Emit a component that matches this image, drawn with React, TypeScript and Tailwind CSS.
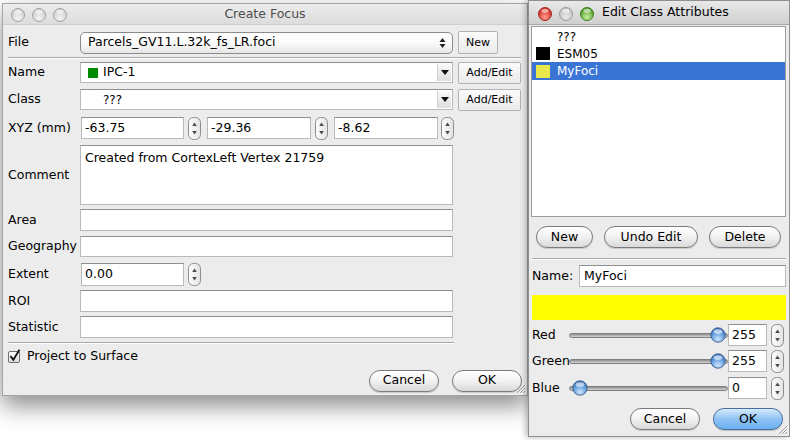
import React from 'react';

function Lights({ active }: { active: boolean }) {
  const fills = active
    ? [
        ['#ff9c8f', '#d3271b', '#9c2a22'],
        ['#e8e8e8', '#c2c2c2', '#9a9a9a'],
        ['#c8f0a0', '#4c9c22', '#3f7a22'],
      ]
    : [
        ['#f4f4f4', '#cfcfcf', '#a2a2a2'],
        ['#f4f4f4', '#cfcfcf', '#a2a2a2'],
        ['#f4f4f4', '#cfcfcf', '#a2a2a2'],
      ];
  return (
    <svg width="58" height="16" viewBox="0 0 58 16">
      <defs>
        {fills.map((f, i) => (
          <radialGradient key={i} id={`tl${active ? 'a' : 'i'}${i}`} cx="0.5" cy="0.75" r="0.65">
            <stop offset="0" stopColor={f[0]} />
            <stop offset="1" stopColor={f[1]} />
          </radialGradient>
        ))}
      </defs>
      {fills.map((f, i) => (
        <g key={i}>
          <circle cx={7 + i * 21} cy="8" r="6.5" fill={`url(#tl${active ? 'a' : 'i'}${i})`} stroke={f[2]} strokeWidth="1" />
          <ellipse cx={7 + i * 21} cy="4.8" rx="3.6" ry="2" fill="#fff" opacity="0.55" />
        </g>
      ))}
    </svg>
  );
}

function Spinner() {
  return (
    <svg width="13" height="23" viewBox="0 0 13 23" className="shrink-0">
      <defs>
        <linearGradient id="spg" x1="0" x2="1" y1="0" y2="0">
          <stop offset="0" stopColor="#ffffff" />
          <stop offset="1" stopColor="#e2e2e2" />
        </linearGradient>
      </defs>
      <rect x="0.5" y="0.5" width="12" height="22" rx="5" fill="url(#spg)" stroke="#8d8d8d" />
      <path d="M6.5 5.5 L8.8 9 L4.2 9 Z" fill="#4a4a4a" />
      <path d="M6.5 17.5 L8.8 14 L4.2 14 Z" fill="#4a4a4a" />
    </svg>
  );
}

function Grip() {
  return (
    <svg width="11" height="11" viewBox="0 0 11 11">
      <path d="M10 2 L2 10 M10 5 L5 10 M10 8 L8 10" stroke="#9a9a9a" strokeWidth="1" />
      <path d="M10.8 2.8 L2.8 10.8 M10.8 5.8 L5.8 10.8" stroke="#fff" strokeWidth="0.8" />
    </svg>
  );
}

function Thumb() {
  return (
    <svg width="16" height="16" viewBox="0 0 16 16">
      <defs>
        <radialGradient id="thg" cx="0.5" cy="0.8" r="0.7">
          <stop offset="0" stopColor="#cfe6fb" />
          <stop offset="0.6" stopColor="#6ea6e2" />
          <stop offset="1" stopColor="#3a73bd" />
        </radialGradient>
      </defs>
      <circle cx="8" cy="8" r="7.2" fill="url(#thg)" stroke="#37598a" strokeWidth="0.9" />
      <ellipse cx="8" cy="4.6" rx="4.4" ry="2.4" fill="#fff" opacity="0.6" />
    </svg>
  );
}

function Slider({ left }: { left: string }) {
  return (
    <div className="relative h-[22px] w-[159px] flex items-center">
      <div className="h-[5px] w-full rounded-full border border-[#7f7f7f] bg-linear-to-b from-[#8e8e8e] to-[#d6d6d6]" />
      <div className={`absolute top-[3px] ${left}`}>
        <Thumb />
      </div>
    </div>
  );
}

function Groove({ className }: { className: string }) {
  return <div className={`h-[2px] shrink-0 border-t border-[#a9a9a9] border-b border-b-white ${className}`} />;
}

const field = 'bg-white border border-[#b9b9b9] border-t-[#8e8e8e] flex items-center';
const aqua =
  'h-[22px] rounded-full border border-[#7b7b7b] bg-linear-to-b from-white via-[#f1f1f1] to-[#d9d9d9] shadow-[0_1px_1px_rgba(0,0,0,0.15)] flex items-center justify-center text-[12.5px]';
const square =
  'rounded-[2px] border border-[#b3b3b3] bg-linear-to-b from-[#fbfbfb] to-[#ebebeb] flex items-center justify-center text-[11px]';

function Row({ label, className, children }: { label: string; className: string; children: React.ReactNode }) {
  return (
    <div className={`flex shrink-0 items-center ${className}`}>
      <div className="w-[72px] shrink-0 text-[12.5px]">{label}</div>
      {children}
    </div>
  );
}

function ComboArrow() {
  return (
    <div className="ml-auto mr-[1px] h-[17px] w-[14px] bg-linear-to-b from-[#fafafa] to-[#dedede] border-l border-[#cfcfcf] flex items-center justify-center">
      <svg width="8" height="5" viewBox="0 0 8 5">
        <path d="M0 0 L8 0 L4 5 Z" fill="#111" />
      </svg>
    </div>
  );
}

export default function App() {
  return (
    <div className="w-[790px] h-[440px] bg-white flex items-start overflow-hidden font-['DejaVu_Sans',sans-serif] text-black leading-none">
      {/* Create Focus */}
      <div className="relative ml-[2px] mt-[3px] w-[526px] h-[393px] shrink-0 border border-[#a4a4a4] bg-[#ececec] shadow-[0_10px_22px_rgba(0,0,0,0.45)] flex flex-col">
        <div className="h-[21px] shrink-0 relative flex items-center justify-center bg-linear-to-b from-[#ececec] to-[#dcdcdc] border-b border-[#d0d0d0]">
          <div className="absolute left-[8px] top-[3px]">
            <Lights active={false} />
          </div>
          <span className="text-[12.5px] text-[#4d4d4d]">Create Focus</span>
        </div>
        <div className="pl-[5px] flex flex-col">
          <Row label="File" className="mt-[6px] h-[23px]">
            <div className="w-[373px] h-[22px] rounded-[5px] border border-[#8c8c8c] bg-linear-to-b from-white via-[#fafafa] to-[#e6e6e6] flex items-center pl-[7px] pr-[6px] text-[12.5px]">
              Parcels_GV11.L.32k_fs_LR.foci
              <svg className="ml-auto" width="7" height="12" viewBox="0 0 7 12">
                <path d="M3.5 1 L6.5 5 L0.5 5 Z M3.5 11 L6.5 7 L0.5 7 Z" fill="#222" />
              </svg>
            </div>
            <div className={`${square} ml-[5px] w-[40px] h-[23px]`}>New</div>
          </Row>
          <Groove className="mt-[3px] w-[513px]" />
          <Row label="Name" className="mt-[2px] h-[23px]">
            <div className={`${field} w-[373px] h-[21px] pl-[7px] text-[12.5px]`}>
              <span className="w-[10px] h-[10px] bg-[#008a00] mr-[5px]" />
              IPC-1
              <ComboArrow />
            </div>
            <div className={`${square} ml-[5px] w-[63px] h-[22px]`}>Add/Edit</div>
          </Row>
          <Row label="Class" className="mt-[4px] h-[23px]">
            <div className={`${field} w-[373px] h-[21px] pl-[22px] text-[12px]`}>
              ???
              <ComboArrow />
            </div>
            <div className={`${square} ml-[5px] w-[63px] h-[22px]`}>Add/Edit</div>
          </Row>
          <Row label="XYZ (mm)" className="mt-[5px] h-[24px]">
            <div className={`${field} ml-[1px] w-[103px] h-[22px] pl-[3px] text-[12.5px]`}>-63.75</div>
            <div className="ml-[4px]"><Spinner /></div>
            <div className={`${field} ml-[6px] w-[104px] h-[22px] pl-[3px] text-[12.5px]`}>-29.36</div>
            <div className="ml-[4px]"><Spinner /></div>
            <div className={`${field} ml-[6px] w-[104px] h-[22px] pl-[3px] text-[12.5px]`}>-8.62</div>
            <div className="ml-[3px]"><Spinner /></div>
          </Row>
          <Row label="Comment" className="mt-[5px] h-[60px]">
            <div className={`${field} !items-start w-[373px] h-[60px] pl-[4px] pt-[6px] text-[12.5px]`}>
              Created from CortexLeft Vertex 21759
            </div>
          </Row>
          <Row label="Area" className="mt-[4px] h-[22px]">
            <div className={`${field} w-[373px] h-[22px]`} />
          </Row>
          <Row label="Geography" className="mt-[4px] h-[22px]">
            <div className={`${field} w-[373px] h-[21px]`} />
          </Row>
          <Row label="Extent" className="mt-[5px] h-[24px]">
            <div className={`${field} ml-[1px] w-[103px] h-[23px] pl-[3px] text-[12.5px]`}>0.00</div>
            <div className="ml-[4px]"><Spinner /></div>
          </Row>
          <Row label="ROI" className="mt-[4px] h-[22px]">
            <div className={`${field} w-[373px] h-[22px]`} />
          </Row>
          <Row label="Statistic" className="mt-[4px] h-[22px]">
            <div className={`${field} w-[373px] h-[22px]`} />
          </Row>
          <Groove className="mt-[4px] w-[446px]" />
          <div className="mt-[4px] h-[16px] flex items-center">
            <svg width="14" height="14" viewBox="0 0 14 14">
              <defs>
                <linearGradient id="cbg" x1="0" x2="0" y1="0" y2="1">
                  <stop offset="0" stopColor="#ffffff" />
                  <stop offset="1" stopColor="#dcdcdc" />
                </linearGradient>
              </defs>
              <rect x="0.5" y="2.5" width="11" height="11" rx="1.5" fill="url(#cbg)" stroke="#6f6f6f" />
              <path d="M2.5 7 L5.3 10.8 L11.5 0.8" stroke="#111" strokeWidth="1.8" fill="none" />
            </svg>
            <span className="ml-[5px] text-[12.5px]">Project to Surface</span>
          </div>
          <div className="mt-[5px] h-[23px] flex items-center justify-end pr-[5px]">
            <div className={`${aqua} w-[70px]`}>Cancel</div>
            <div className={`${aqua} ml-[13px] w-[70px]`}>OK</div>
          </div>
        </div>
        <div className="absolute right-[1px] bottom-[1px]"><Grip /></div>
      </div>

      {/* Edit Class Attributes */}
      <div className="relative w-[262px] h-[437px] shrink-0 border border-[#8f8f8f] bg-[#ececec] shadow-[-2px_0_6px_rgba(0,0,0,0.3)] flex flex-col">
        <div className="h-[24px] shrink-0 relative flex items-center bg-linear-to-b from-[#e9e9e9] to-[#cfcfcf] border-b border-[#a8a8a8]">
          <div className="absolute left-[9px] top-[5px]">
            <Lights active />
          </div>
          <span className="ml-[73px] text-[12.5px] text-black">Edit Class Attributes</span>
        </div>
        <div className="ml-[2px] mt-[1px] w-[255px] h-[191px] shrink-0 bg-white border border-[#9d9d9d] flex flex-col pt-[1px] text-[12px]">
          <div className="h-[17px] flex items-center pl-[25px]">???</div>
          <div className="h-[17px] flex items-center pl-[4px]">
            <span className="w-[14px] h-[13px] bg-black mr-[7px]" />
            ESM05
          </div>
          <div className="h-[18px] flex items-center pl-[4px] bg-[#3a75d6] text-white">
            <span className="w-[14px] h-[13px] bg-[#e8e84a] mr-[7px]" />
            MyFoci
          </div>
        </div>
        <div className="mt-[9px] h-[22px] shrink-0 flex items-center pl-[7px]">
          <div className={`${aqua} w-[57px]`}>New</div>
          <div className={`${aqua} ml-[11px] w-[94px]`}>Undo Edit</div>
          <div className={`${aqua} ml-[11px] w-[72px]`}>Delete</div>
        </div>
        <Groove className="mt-[10px] ml-[3px] w-[254px]" />
        <div className="mt-[5px] h-[22px] shrink-0 flex items-center pl-[3px]">
          <span className="w-[47px] text-[12.5px]">Name:</span>
          <div className={`${field} w-[207px] h-[22px] pl-[4px] text-[12.5px]`}>MyFoci</div>
        </div>
        <div className="mt-[8px] ml-[3px] w-[254px] h-[25px] shrink-0 bg-[#ffff00]" />
        {[
          { label: 'Red', value: '255', left: 'left-[141px]', mt: 'mt-[4px]' },
          { label: 'Green', value: '255', left: 'left-[141px]', mt: 'mt-[4px]' },
          { label: 'Blue', value: '0', left: 'left-[3px]', mt: 'mt-[5px]' },
        ].map((r) => (
          <div key={r.label} className={`${r.mt} h-[22px] shrink-0 flex items-center pl-[3px]`}>
            <span className="w-[37px] text-[12.5px]">{r.label}</span>
            <Slider left={r.left} />
            <div className={`${field} w-[39px] h-[22px] pl-[3px] text-[12.5px]`}>{r.value}</div>
            <div className="ml-[4px]"><Spinner /></div>
          </div>
        ))}
        <div className="mt-[9px] h-[22px] shrink-0 flex items-center justify-end pr-[6px]">
          <div className={`${aqua} w-[70px]`}>Cancel</div>
          <div className="ml-[13px] w-[70px] h-[22px] rounded-full border border-[#4a6f9e] bg-linear-to-b from-[#d6ebfd] via-[#8ec2f3] to-[#6bb1f1] shadow-[0_1px_1px_rgba(0,0,0,0.2)] flex items-center justify-center text-[12.5px]">
            OK
          </div>
        </div>
        <div className="absolute right-[1px] bottom-[1px]"><Grip /></div>
      </div>
    </div>
  );
}
